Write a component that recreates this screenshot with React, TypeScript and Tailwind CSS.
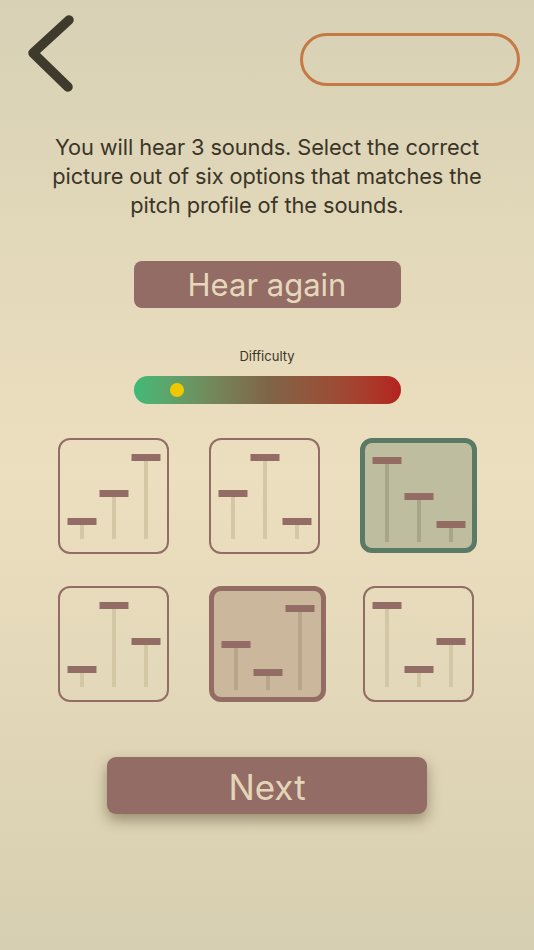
import * as React from 'react';

// --------------------------------
// Types
// --------------------------------
type Level = 'low' | 'mid' | 'high';

type Option = {
  id: number;
  levels: [Level, Level, Level];
  state?: 'correct' | 'picked';
};

// cap top (px) inside the tile's content box, per pitch level
const LEVEL_Y: Record<Level, number> = {
  high: 14,
  mid: 50,
  low: 78,
};

const OPTIONS: Option[] = [
  { id: 1, levels: ['low', 'mid', 'high'] },
  { id: 2, levels: ['mid', 'high', 'low'] },
  { id: 3, levels: ['high', 'mid', 'low'], state: 'correct' },
  { id: 4, levels: ['low', 'high', 'mid'] },
  { id: 5, levels: ['mid', 'low', 'high'], state: 'picked' },
  { id: 6, levels: ['high', 'low', 'mid'] },
];

const FONT = { fontFamily: 'Inter, "Liberation Sans", Arial, sans-serif' };

// --------------------------------
// Pieces
// --------------------------------
const BackChevron = () => (
  <svg width="56" height="82" viewBox="0 0 56 82" className="block">
    <path
      d="M49 7 L13 40 L48 74"
      fill="none"
      stroke="#3f3b2c"
      strokeWidth="9.5"
      strokeLinecap="round"
      strokeLinejoin="round"
    />
  </svg>
);

const PitchTile = ({ option, index }: { option: Option; index: number }) => {
  const stems = option.state === 'correct' ? '#a7a68a' : option.state === 'picked' ? '#b6a58b' : '#d3c7a6';

  let tileClass = 'w-[111px] h-[116px] rounded-[12px] border-2 border-[#936c66]';
  if (option.state === 'correct') {
    tileClass = 'w-[117px] h-[115px] rounded-[12px] border-[5px] border-[#5a7a66] bg-[#bfbd9f]';
  } else if (option.state === 'picked') {
    tileClass = 'w-[117px] h-[116px] rounded-[12px] border-[5px] border-[#936c66] bg-[#cbb79c]';
  } else if (index % 3 === 2) {
    tileClass += ' ml-[3px]';
  }

  return (
    <div className={tileClass}>
      <svg width="107" height="106" viewBox="0 0 107 106" className="block">
        {option.levels.map((level, i) => {
          const cx = 22 + i * 32;
          const top = LEVEL_Y[level];
          return (
            <g key={i}>
              <rect x={cx - 2} y={top + 4} width="4" height={99 - top - 4} fill={stems} />
              <rect x={cx - 14.5} y={top} width="29" height="7" fill="#936c66" />
            </g>
          );
        })}
      </svg>
    </div>
  );
};

// --------------------------------
// Screen
// --------------------------------
export default function App() {
  return (
    <div
      className="w-[534px] h-[950px] overflow-hidden bg-gradient-to-b from-[#d8d1b5] via-[#ecdfbf] to-[#d7cfb1] flex flex-col"
      style={FONT}
    >
      {/* top bar */}
      <div className="flex justify-between items-start pl-[20px] pr-[14px] pt-[13px]">
        <BackChevron />
        <div className="mt-[20px] w-[220px] h-[53px] rounded-full border-[3px] border-[#c57a45]" />
      </div>

      <p className="mt-[38px] px-[38px] text-center text-[21.8px] leading-[29px] text-[#3b3528] tracking-[-0.1px]">
        You will hear 3 sounds. Select the correct picture out of six options that matches the pitch profile of the
        sounds.
      </p>

      <button
        type="button"
        className="mx-auto mt-[41px] w-[267px] h-[47px] rounded-[8px] bg-[#936c66] text-[#e6d8bb] text-[31px] leading-[47px]"
      >
        Hear again
      </button>

      <div className="mt-[40px] text-center text-[13px] leading-[16px] text-[#3b3528]">Difficulty</div>

      {/* difficulty gradient with marker */}
      <div className="relative mx-auto mt-[12px] w-[267px] h-[28px] rounded-full bg-gradient-to-r from-[#3cba78] via-[#7e6547] to-[#b4211f]">
        <div className="absolute left-[36px] top-[7px] w-[14px] h-[14px] rounded-full bg-[#f0c800]" />
      </div>

      <div className="mt-[34px] ml-[58px] grid grid-cols-[117px_117px_117px] gap-x-[34px] gap-y-[32px]">
        {OPTIONS.map((option, i) => (
          <PitchTile key={option.id} option={option} index={i} />
        ))}
      </div>

      <button
        type="button"
        className="mx-auto mt-[55px] w-[320px] h-[57px] rounded-[9px] bg-[#936c66] text-[#e3d6b7] text-[35px] leading-[60px] shadow-[0_6px_14px_rgba(70,55,30,0.45)]"
      >
        Next
      </button>
    </div>
  );
}
